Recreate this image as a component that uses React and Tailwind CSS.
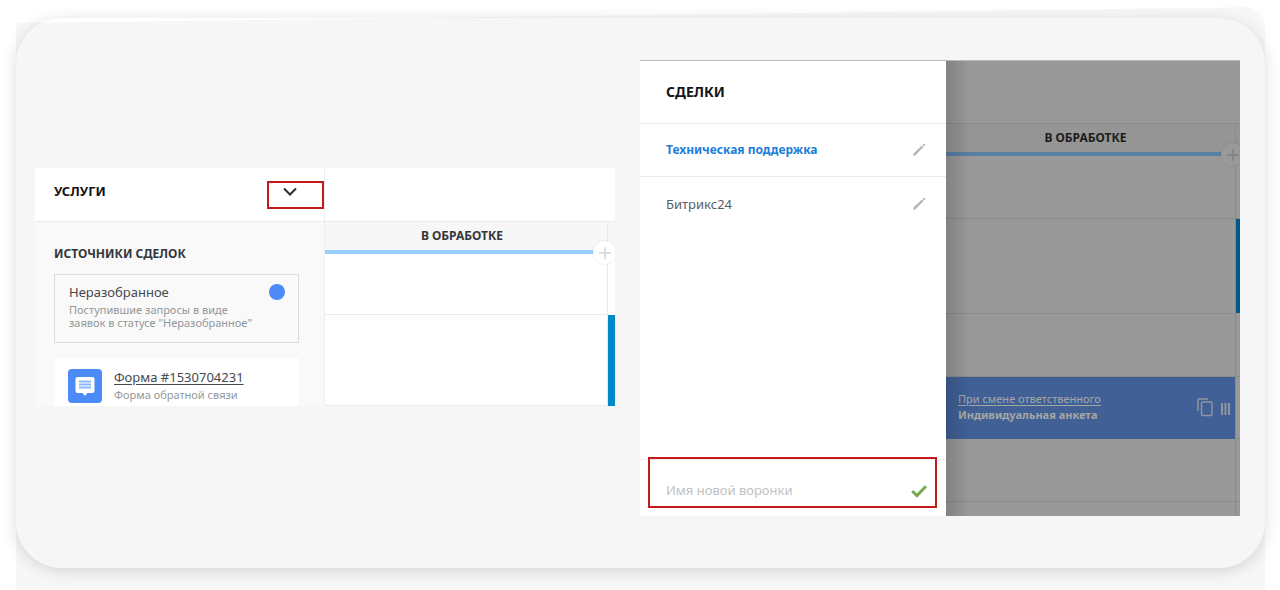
const pipelines = [
  { id: "support", title: "Техническая поддержка", active: true },
  { id: "bitrix", title: "Битрикс24", active: false },
];

export default function App() {
  return (
    <main className="relative min-h-[590px] overflow-hidden bg-white px-4 pt-[18px] pb-[22px] font-['Noto_Sans',sans-serif] text-[#45494f]">
      <div className="absolute top-[7px] right-[15px] bottom-0 left-4 rounded-tr-[20px] bg-[#f7f7f7] [clip-path:polygon(0_16px,100%_0,100%_100%,0_100%)]" />
      <section className="relative mr-[-1px] flex items-start gap-[25px] rounded-[46px] bg-[#f6f6f6] pt-[42px] pr-[25px] pb-[52px] pl-[19px] shadow-[0_3px_16px_rgba(0,0,0,0.14)]">
        <div className="pointer-events-none absolute inset-0 overflow-hidden rounded-[46px]">
          <div className="h-[5px] w-[400px] bg-white [clip-path:polygon(0_0,100%_0,0_100%)]" />
        </div>
        <ServicesPanel />
        <DealsPanel />
      </section>
    </main>
  );
}

function ServicesPanel() {
  return (
    <div className="relative mt-[108px] flex min-w-0 flex-[580] overflow-hidden bg-white">
      <aside className="flex w-1/2 flex-col border-r border-[#ebeeee] bg-[#f9f9f9]">
        <header className="relative flex h-[54px] items-center justify-between border-b border-[#e8ebeb] bg-white pr-[26px] pb-2 pl-[19px]">
          <h2 className="text-[13px] leading-4 font-bold text-[#151515]">УСЛУГИ</h2>
          <button type="button" aria-label="Выбрать воронку" className="cursor-pointer">
            <svg className="h-4 w-4" viewBox="0 0 16 16" fill="none" stroke="#2b2d30" strokeWidth="2">
              <path d="M2 5.500 8 11.500 14 5.500" />
            </svg>
          </button>
          <div className="pointer-events-none absolute top-[13px] right-0 h-7 w-[57px] border-2 border-[#c41a1a]" />
        </header>
        <div className="pr-[25px] pl-[19px] pt-6">
          <h3 className="text-[12px] leading-4 font-bold text-[#33363a]">ИСТОЧНИКИ СДЕЛОК</h3>
          <div className="mt-3 flex h-[69px] justify-between border border-[#d9dddd] pt-[9px] pr-[13px] pl-[14px]">
            <div className="whitespace-nowrap">
              <p className="text-[13px] leading-4">Неразобранное</p>
              <p className="mt-[3px] text-[11px] leading-[13px] text-[#92989b]">
                Поступившие запросы в виде
                <br />
                заявок в статусе "Неразобранное"
              </p>
            </div>
            <span className="h-4 w-4 shrink-0 rounded-full bg-[#4c8bf7]" />
          </div>
          <div className="mt-[15px] flex h-12 gap-3 bg-white pt-[11px] pl-[14px]">
            <FormIcon />
            <div className="whitespace-nowrap">
              <a href="#form" className="block text-[13px] leading-4 underline underline-offset-2">
                Форма #1530704231
              </a>
              <p className="mt-[3px] text-[11px] leading-[13px] text-[#92989b]">Форма обратной связи</p>
            </div>
          </div>
        </div>
      </aside>
      <div className="flex min-w-0 flex-1 flex-col">
        <div className="h-[54px] border-b border-[#e8ebeb]" />
        <div className="flex flex-1">
          <div className="flex flex-1 flex-col">
            <div className="relative h-8 border-b-4 border-[#99ccff] bg-[#f7f7f7]">
              <h3 className="pr-2 text-center text-[12px] leading-7 font-bold text-[#33363a]">В ОБРАБОТКЕ</h3>
              <button
                type="button"
                aria-label="Добавить этап"
                className="absolute top-[19px] -right-[9px] z-10 flex h-[23px] w-[23px] items-center justify-center rounded-full bg-white shadow-[0_0_2px_rgba(0,0,0,0.12)]"
              >
                <PlusIcon color="#d2d4d5" />
              </button>
            </div>
            <div className="h-[61px] border-b border-[#ebeded]" />
            <div className="flex-1 border-b border-[#ebeded]" />
          </div>
          <div className="flex w-2 flex-col border-l border-[#e8ebeb]">
            <div className="h-8 bg-[#f7f7f7]" />
            <div className="h-[61px]" />
            <div className="flex-1 bg-[#0088c7]" />
          </div>
        </div>
      </div>
    </div>
  );
}

function DealsPanel() {
  return (
    <div className="relative flex h-[456px] min-w-0 flex-[600] overflow-hidden border-t border-[#b9b9b9] bg-[#999999]">
      <aside className="flex w-[51%] flex-col bg-white">
        <header className="flex h-[63px] items-center border-b border-[#e9ebeb] pl-[26px]">
          <h2 className="text-[14px] leading-4 font-bold text-[#151515]">СДЕЛКИ</h2>
        </header>
        <ul className="flex-1">
          {pipelines.map((item) => (
            <li
              key={item.id}
              className={
                item.active
                  ? "flex h-[53px] items-center justify-between border-b border-[#e9ebeb] pr-5 pl-[26px]"
                  : "flex h-[53px] items-center justify-between pr-5 pl-[26px]"
              }
            >
              <a
                href={"#" + item.id}
                className={
                  item.active
                    ? "text-[12px] leading-4 font-bold text-[#1b7edb]"
                    : "text-[13px] leading-4 text-[#575d66]"
                }
              >
                {item.title}
              </a>
              <button type="button" aria-label={"Изменить " + item.title} className="cursor-pointer">
                <PencilIcon />
              </button>
            </li>
          ))}
        </ul>
        <form className="relative flex h-[57px] items-center justify-between border-t border-[#eef0f0] pt-1 pr-[19px] pl-[26px]">
          <input
            type="text"
            aria-label="Имя новой воронки"
            placeholder="Имя новой воронки"
            className="min-w-0 flex-1 text-[13px] leading-4 outline-none placeholder:text-[#bfc1c4]"
          />
          <button type="button" aria-label="Сохранить" className="cursor-pointer">
            <svg className="h-4 w-4" viewBox="0 0 16 16" fill="none" stroke="#76a94b" strokeWidth="3">
              <path d="M1.200 9 6 13.600 15 4.200" />
            </svg>
          </button>
          <div className="pointer-events-none absolute -top-[3px] right-[9px] left-2 h-[51px] border-2 border-[#c41a1a]" />
        </form>
      </aside>
      <div className="relative flex min-w-0 flex-1 flex-col text-[#1d1d1d]">
        <div className="h-[63px] border-b border-[#8b8b8b]" />
        <div className="flex flex-1">
          <div className="flex flex-1 flex-col">
            <div className="relative h-8 border-b-4 border-[#5a7fa5] bg-[#959595]">
              <h3 className="pr-[10px] text-center text-[12px] leading-7 font-bold">В ОБРАБОТКЕ</h3>
              <button
                type="button"
                aria-label="Добавить этап"
                className="absolute top-[19px] -right-[9px] z-10 flex h-[23px] w-[23px] items-center justify-center rounded-full bg-[#999999] shadow-[0_0_2px_rgba(0,0,0,0.15)]"
              >
                <PlusIcon color="#7e7f80" />
              </button>
            </div>
            <div className="h-[63px] border-b border-[#8b8b8b]" />
            <div className="h-[95px] border-b border-[#8b8b8b]" />
            <div className="h-[63px] border-b border-[#8b8b8b]" />
            <div className="flex h-[62px] items-center justify-between bg-[#406096] pr-[5px] pb-[2px] pl-3 text-[#a6a6a6]">
              <div className="whitespace-nowrap">
                <a href="#trigger" className="block text-[11px] leading-4 underline underline-offset-2">
                  При смене ответственного
                </a>
                <p className="text-[11px] leading-4 font-bold">Индивидуальная анкета</p>
              </div>
              <div className="flex items-center gap-2">
                <button type="button" aria-label="Копировать" className="cursor-pointer">
                  <CopyIcon />
                </button>
                <svg className="h-[18px] w-[9px]" viewBox="0 0 9 18" fill="#8e959f">
                  <path d="M0 5h2v12H0zM3.500 5h2v12h-2zM7 5h2v12H7z" />
                </svg>
              </div>
            </div>
            <div className="h-[63px] border-b border-[#8b8b8b]" />
          </div>
          <div className="flex w-[5px] flex-col border-l border-[#8b8b8b]">
            <div className="h-8 bg-[#959595]" />
            <div className="h-[63px] border-b border-[#8b8b8b]" />
            <div className="h-[94px] bg-[#005a85]" />
            <div className="h-[64px] border-b border-[#8b8b8b]" />
            <div className="h-[62px] border-b border-[#8b8b8b]" />
            <div className="h-[63px] border-b border-[#8b8b8b]" />
          </div>
        </div>
        <div className="pointer-events-none absolute inset-y-0 left-0 w-6 bg-linear-to-r from-black/15 to-transparent" />
      </div>
    </div>
  );
}

function FormIcon() {
  return (
    <svg className="h-[34px] w-[34px] shrink-0" viewBox="0 0 34 34">
      <rect width="34" height="34" rx="4" fill="#4c8bf7" />
      <path
        fill="#fff"
        d="M9.500 8h15a2 2 0 0 1 2 2v12a2 2 0 0 1-2 2h-5L17 27l-2.500-3h-5a2 2 0 0 1-2-2V10a2 2 0 0 1 2-2z"
      />
      <path d="M11 12.500h12M11 15.500h12M11 18.500h12" stroke="#8db5fa" strokeWidth="1.800" />
    </svg>
  );
}

function PlusIcon({ color }) {
  return (
    <svg className="h-3 w-3" viewBox="0 0 12 12" stroke={color} strokeWidth="1.500">
      <path d="M6 0v12M0 6h12" />
    </svg>
  );
}

function PencilIcon() {
  return (
    <svg className="h-[14px] w-[14px]" viewBox="0 0 14 14" fill="#b3b5b8">
      <path d="M1 13 1.700 10.300 9.900 2.400 11.500 4 3.500 12.200zM10.500 1.800 11.400.9a.8.8 0 0 1 1.100 0l.500.500a.8.8 0 0 1 0 1.100l-.900.900z" />
    </svg>
  );
}

function CopyIcon() {
  return (
    <svg className="h-5 w-4" viewBox="0 0 16 20" fill="none" stroke="#8e959f" strokeWidth="1.500">
      <rect x="4.500" y="5" width="10.500" height="13.500" rx="1.200" />
      <path d="M1 14V3.200A1.200 1.200 0 0 1 2.200 2H11" />
    </svg>
  );
}
